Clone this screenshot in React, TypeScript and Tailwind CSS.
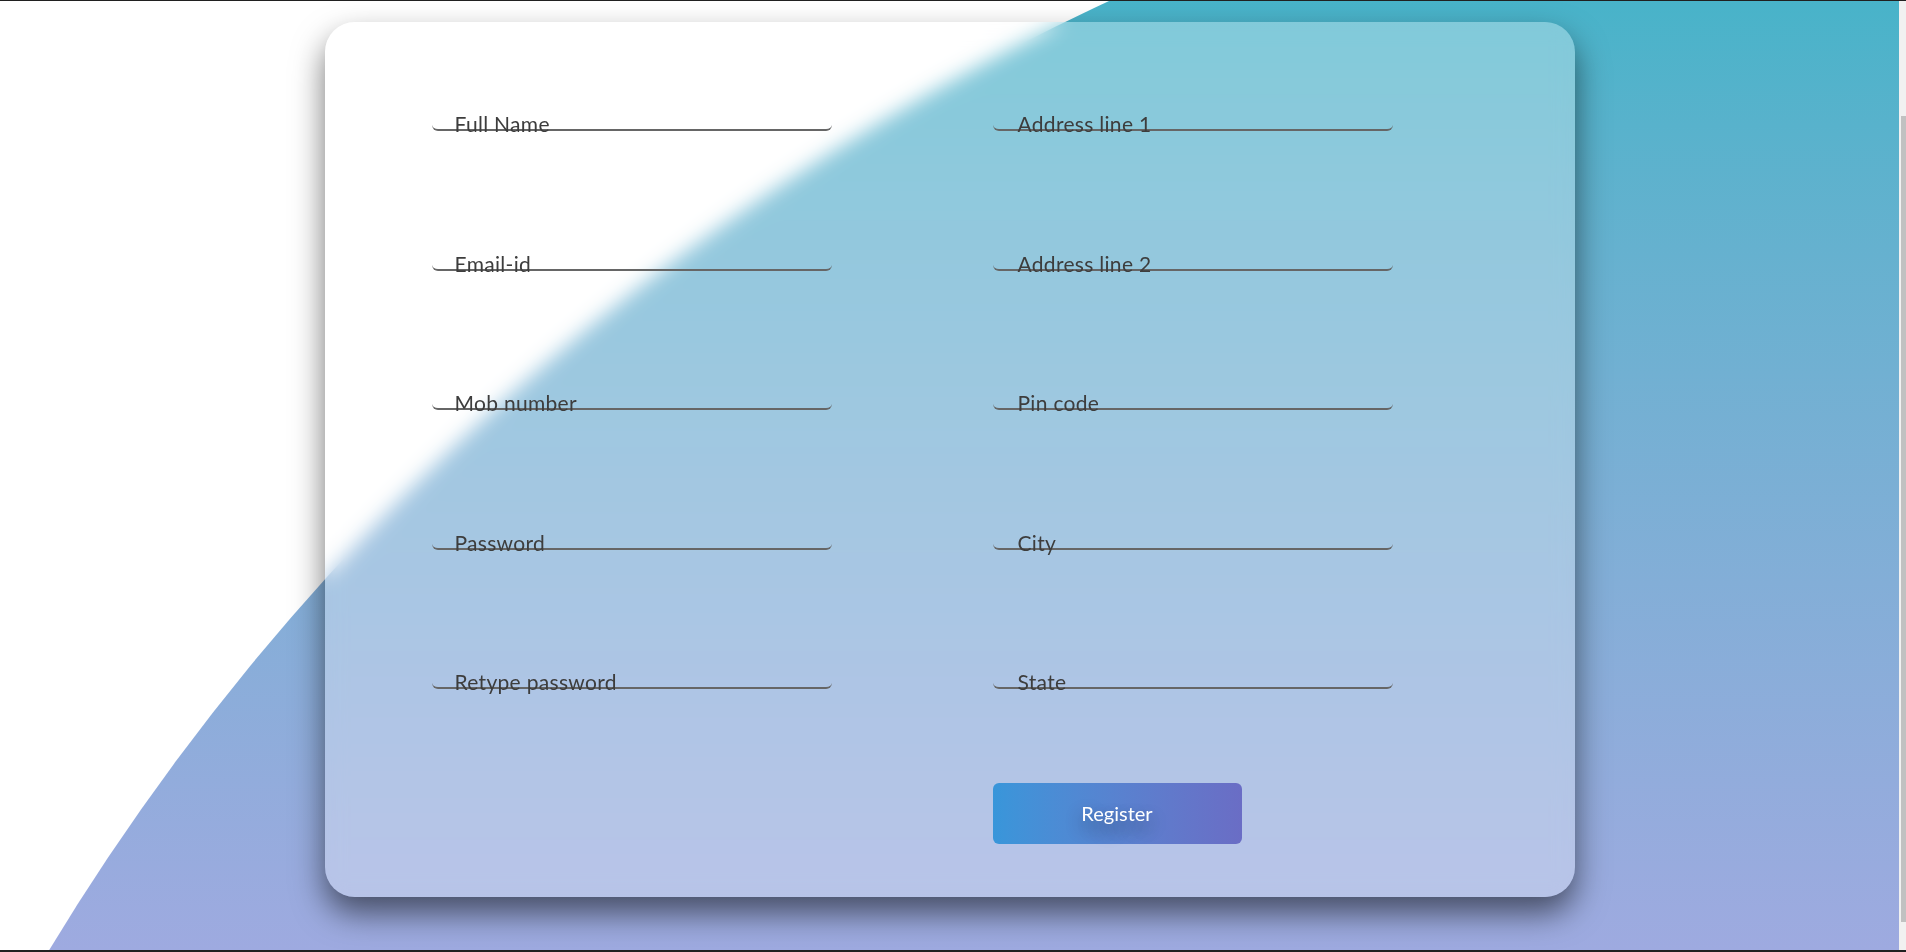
const left = ["Full Name", "Email-id", "Mob number", "Password", "Retype password"];
const right = ["Address line 1", "Address line 2", "Pin code", "City", "State"];

function Field({ label, offset }: { label: string; offset: string }) {
  return (
    <div className="relative w-[400px]">
      <input
        type="text"
        className="block h-[42px] w-full rounded-[6px] border-b-2 border-[#666] bg-transparent outline-none"
      />
      <label
        className={`pointer-events-none absolute bottom-[-3px] ${offset} text-[21px] leading-none tracking-[0.3px] text-[#3d3d3d]`}
      >
        {label}
      </label>
    </div>
  );
}

export default function App() {
  const cells: React.ReactNode[] = [];
  left.forEach((l, i) => {
    cells.push(<Field key={l} label={l} offset="left-[23px]" />);
    cells.push(<Field key={right[i]} label={right[i]} offset="left-[25px]" />);
  });

  return (
    <div className="flex h-[952px] flex-col overflow-hidden bg-[#202020] font-['Lato','Noto_Sans',sans-serif]">
      <div className="h-px shrink-0" />
      <div className="flex min-h-0 flex-1">
        <main className="relative flex-1 overflow-hidden bg-white">
          <div className="absolute inset-0 bg-gradient-to-b from-[#48b3c9] to-[#9eaae0] [clip-path:circle(2437px_at_2134px_2211px)]" />
          <div className="relative mx-auto mt-[21px] h-[875px] w-[1250px] rounded-[30px] bg-white/30 pl-[107px] pt-[67px] shadow-[0_16px_32px_rgba(0,0,0,0.55)] backdrop-blur-[10px]">
            <div className="grid grid-cols-[561px_561px] gap-y-[97.5px]">
              {cells}
              <div />
              <button className="-mt-[4px] h-[61px] w-[249px] rounded-[6px] bg-gradient-to-r from-[#3896da] to-[#6a6dc5] text-[20px] text-white [text-shadow:0_8px_18px_rgba(0,0,0,0.45)]">
                Register
              </button>
            </div>
          </div>
        </main>
        <div className="flex w-[7px] shrink-0 flex-col bg-[#f1f1f1] pl-[2px] pt-[115px] pb-[28px]">
          <div className="flex-1 bg-[#c1c1c1]" />
        </div>
      </div>
      <div className="h-[2px] shrink-0" />
    </div>
  );
}
